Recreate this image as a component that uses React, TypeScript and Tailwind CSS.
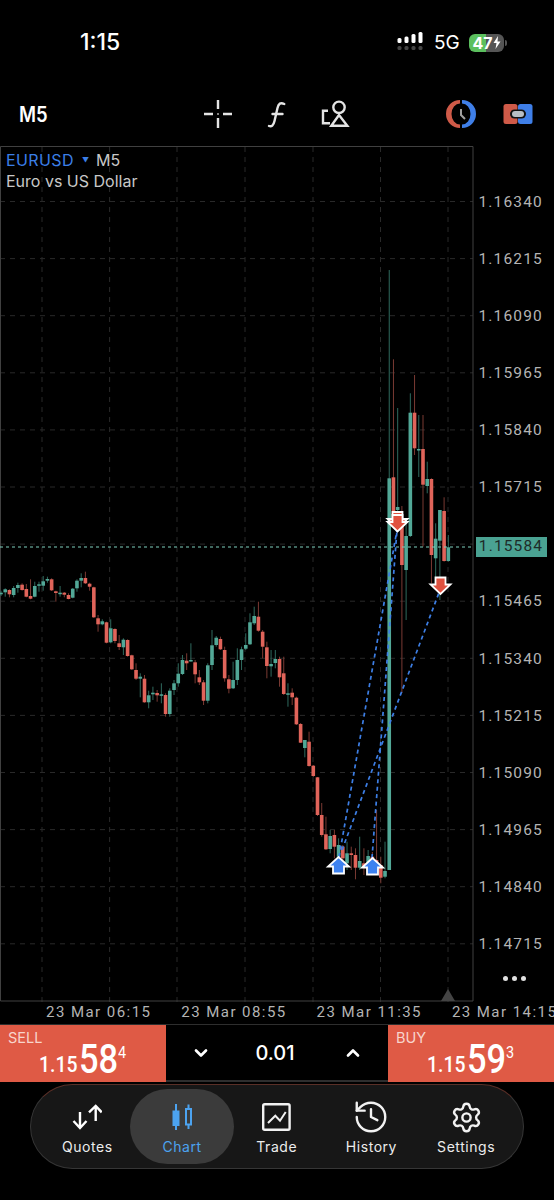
import { ChevronDown, ChevronUp, History, Settings } from "lucide-react"

type Candle = [string, number, number, number, number]

const candles: Candle[] = [
  ["g", 592.7, 594.3, 590.7, 596], ["g", 589.3, 592.3, 588.3, 596.7], ["r", 590, 594.3, 589.3, 597.3], ["g", 588, 595, 586, 597.3],
  ["g", 585, 588, 582.7, 592.7], ["r", 584.7, 590, 583.3, 590.7], ["r", 589, 596.7, 584, 597.3], ["r", 596, 598.7, 579.3, 599.3],
  ["g", 586, 596.7, 581.7, 597.3], ["g", 584.3, 585, 581.7, 591.7], ["g", 581.3, 585.7, 576, 590.7], ["g", 579, 580.7, 576.7, 582.7],
  ["r", 579.3, 590.3, 578.3, 591], ["r", 591.3, 593, 590.7, 601.7], ["g", 592.7, 593.3, 586, 596.7], ["r", 592.7, 594.7, 592, 597.3],
  ["r", 595, 599, 593.3, 599.3], ["g", 588.7, 597.7, 588, 598.3], ["g", 580.7, 588.3, 579.3, 591.7], ["g", 578, 580.7, 573.3, 587.3],
  ["r", 578, 583.3, 571.7, 584], ["r", 583.7, 586.7, 582.7, 590.7], ["r", 587.3, 617.3, 586.7, 618], ["r", 618.3, 624.3, 615, 631.7],
  ["g", 621.3, 624.3, 619.3, 625.3], ["r", 622.3, 642.7, 621.7, 643.3], ["g", 628.3, 642.3, 619.3, 643.3], ["r", 629, 641, 628.3, 643.3],
  ["r", 643.3, 647, 635, 650], ["g", 639.7, 647.3, 638.3, 655], ["r", 640, 656, 639.3, 656.7], ["r", 655.3, 669.3, 654.7, 670],
  ["r", 670, 678.7, 663.3, 680], ["g", 676.7, 678.7, 673.3, 697.3], ["r", 678.7, 702.3, 675, 702.7], ["g", 695.3, 702.3, 690.7, 708.3],
  ["g", 692.7, 694.3, 686.7, 700], ["r", 693, 695.3, 690, 701.7], ["g", 694.3, 695, 683.3, 703.3], ["r", 695, 714, 693.3, 716.7],
  ["g", 690.7, 714, 688.3, 716.7], ["g", 683.3, 690, 680, 695], ["g", 673.7, 683.3, 663.3, 686.7], ["g", 660, 674, 655, 675],
  ["r", 660.7, 663.3, 653.3, 670], ["g", 660, 660.7, 643.3, 661.7], ["r", 662.3, 674.3, 660, 683.3], ["r", 677.3, 682.3, 670, 685],
  ["r", 682.3, 700.7, 680, 705], ["g", 665.3, 700.7, 663.3, 703.3], ["g", 645.3, 665, 630, 670], ["g", 637.7, 645, 636, 646.7],
  ["r", 639, 649.3, 636.7, 650], ["r", 650, 678.3, 646.7, 681.7], ["r", 679.3, 688.7, 675, 693.3], ["g", 680, 688.3, 661.7, 689],
  ["g", 660, 680, 648.3, 685], ["g", 649.3, 660, 646.7, 670], ["g", 645, 648.7, 633.3, 650], ["g", 622.3, 644.3, 613.3, 645],
  ["g", 616, 623.3, 606.7, 625], ["r", 616.7, 630.7, 601.7, 631.7], ["r", 631.7, 646.7, 630, 658.3], ["r", 647.3, 666, 641.7, 678.3],
  ["g", 664, 666.3, 650, 676.7], ["g", 659, 663, 650, 668.3], ["r", 659, 677.3, 656.7, 686.7], ["r", 673.3, 694, 656.7, 695],
  ["g", 693.3, 694.7, 683.3, 706.7], ["r", 692.7, 697.3, 688.3, 705], ["r", 697.7, 724.3, 696.7, 725], ["r", 724, 742.7, 723, 743],
  ["g", 740, 748, 740, 757.3], ["r", 741.7, 766, 731.7, 766.7], ["r", 765.7, 776, 765, 777], ["r", 777.3, 815, 777, 816],
  ["r", 815, 835, 803, 836.7], ["r", 834.3, 849.3, 816.7, 850], ["g", 836, 849, 830, 853.3], ["r", 835, 846.7, 830, 858.3],
  ["g", 845, 856.7, 838.3, 863.3], ["r", 846.7, 858.3, 845, 860], ["g", 853.3, 863.3, 841.7, 870], ["r", 853.3, 855, 846.7, 870],
  ["r", 855, 867.7, 848.3, 879.3], ["g", 861, 867.7, 836.7, 870], ["r", 863.3, 866.7, 848.3, 875], ["g", 856, 863.3, 850, 868.3],
  ["r", 856.7, 866.7, 852, 870], ["r", 860, 865, 810, 866.7], ["r", 865, 877.7, 856.7, 883.3], ["g", 871, 876.7, 841.7, 878.3],
  ["g", 478.3, 870, 270, 870], ["r", 477.3, 525, 359.3, 525], ["g", 507, 510, 408, 512], ["r", 523, 565, 506, 693],
  ["g", 536, 570, 520, 620], ["g", 412.7, 536, 393.3, 537], ["r", 412.7, 448.3, 375, 455], ["g", 449, 450, 415, 477],
  ["r", 449, 484.7, 415, 546.7], ["g", 479, 486, 461.7, 493.3], ["r", 479, 555, 478.3, 583.3], ["g", 538.7, 558.3, 523.3, 580],
  ["g", 510, 540.7, 510, 600], ["r", 511, 561, 497.3, 561.7], ["g", 547.3, 561, 535, 561.7],
]

const gridX = [42, 109.6, 177, 245, 313, 380.5, 448]
const gridY = [201.5, 258.6, 315.7, 372.8, 429.9, 487, 544.1, 601.2, 658.3, 715.4, 772.5, 829.6, 886.7, 943.8]
const prices = ["1.16340", "1.16215", "1.16090", "1.15965", "1.15840", "1.15715", "", "1.15465", "1.15340", "1.15215", "1.15090", "1.14965", "1.14840", "1.14715"]
const dates = ["23 Mar 06:15", "23 Mar 08:55", "23 Mar 11:35", "23 Mar 14:15"]

function DownArrow({ x, y }: { x: number; y: number }) {
  return (
    <path
      d={`M${x - 5} ${y} h10 v7 h5 l-10 9.5 l-10 -9.5 h5 z`}
      fill="#e0513f"
      stroke="#fff"
      strokeWidth="1.8"
    />
  )
}

function UpArrow({ x, y }: { x: number; y: number }) {
  return (
    <path
      d={`M${x} ${y} l10.5 9.5 h-5 v7 h-11 v-7 h-5 z`}
      fill="#3d82f0"
      stroke="#fff"
      strokeWidth="1.8"
    />
  )
}

function Chart() {
  return (
    <svg width="474" height="860" viewBox="0 146 474 860" className="block shrink-0">
      {gridY.map((y) => (
        <line key={y} x1="0" x2="473" y1={y} y2={y} stroke="#292929" strokeWidth="1" strokeDasharray="5 5" />
      ))}
      {gridX.map((x) => (
        <line key={x} x1={x} x2={x} y1="147" y2="1004" stroke="#292929" strokeWidth="1" strokeDasharray="5 5" />
      ))}
      <path d="M0.5 146.5 H473 V1001 H0.5 Z" fill="none" stroke="#404040" strokeWidth="1" />
      <path d="M441 1001 L448 989 L455 1001 Z" fill="#444" />
      {candles.map((c, i) => {
        const x = 1 + 4.22 * i
        return (
          <line key={i} x1={x} x2={x} y1={c[3]} y2={c[4]} stroke={c[0] === "g" ? "#2f6a5e" : "#7a3a33"} strokeWidth="1" />
        )
      })}
      {candles.map((c, i) => {
        const x = 1 + 4.22 * i
        return (
          <rect
            key={i}
            x={x - 1.8}
            y={c[1]}
            width="3.6"
            height={Math.max(c[2] - c[1], 1.5)}
            fill={c[0] === "g" ? "#52a897" : "#e0645a"}
          />
        )
      })}
      <line x1="0" x2="473" y1="547" y2="547" stroke="#7fd0be" strokeWidth="1" strokeDasharray="3 3" />
      <g stroke="#3d7fe6" strokeWidth="1.7" strokeDasharray="4 3.5" fill="none">
        <line x1="339" y1="857" x2="397" y2="530" />
        <line x1="342" y1="850" x2="440" y2="590" />
        <line x1="372" y1="858" x2="397" y2="530" />
      </g>
      <DownArrow x={397.5} y={512} />
      <DownArrow x={397.5} y={515} />
      <DownArrow x={440.5} y={577.5} />
      <UpArrow x={338.5} y={857} />
      <UpArrow x={372.5} y={858} />
    </svg>
  )
}

function StatusBar() {
  return (
    <div className="flex h-[86px] items-center pl-[80px] pb-[1px] text-white">
      <span className="w-[317px] text-[23px] font-medium leading-none">1:15</span>
      <svg width="30" height="22" viewBox="0 0 30 22" className="mt-[1px]">
        <g fill="#fff">
          <rect x="0.5" y="6" width="4" height="5" rx="1.5" />
          <rect x="7.5" y="4.5" width="4" height="6.5" rx="1.5" />
          <rect x="14.5" y="2" width="4" height="9" rx="1.5" />
          <rect x="21.5" y="0" width="4" height="11" rx="1.5" />
        </g>
        <g fill="#444">
          <rect x="0.5" y="14" width="4" height="4" rx="1.5" />
          <rect x="7.5" y="14" width="4" height="4" rx="1.5" />
          <rect x="14.5" y="14" width="4" height="4" rx="1.5" />
          <rect x="21.5" y="14" width="4" height="4" rx="1.5" />
        </g>
      </svg>
      <span className="ml-[7px] w-[35px] text-[19px] leading-none">5G</span>
      <div className="flex h-[18px] w-[35px] items-center justify-center rounded-[6px] bg-[linear-gradient(90deg,#5bbf5e_48%,#555_48%)] text-[16px] font-bold leading-none">
        47
        <svg width="8" height="13" viewBox="0 0 8 13">
          <path d="M5 0 L0.5 7 H3.5 L2.5 13 L7.5 5.5 H4.5 Z" fill="#fff" />
        </svg>
      </div>
      <div className="ml-[1px] h-[6px] w-[1.5px] rounded-r-full bg-[#555]" />
    </div>
  )
}

function Toolbar() {
  return (
    <div className="flex h-[60px] items-center pb-[4px] pl-[19px] text-[#e6e6e6]">
      <span className="w-[171px] origin-left scale-x-[0.88] text-[21px] font-semibold leading-none text-white">M5</span>
      <div className="flex w-[56px] justify-center">
        <svg width="30" height="30" viewBox="0 0 30 30" stroke="#e4e4e4" strokeWidth="2.4" fill="none">
          <path d="M1 15 H10 M20 15 H29 M15 1 V10 M15 19 V29" />
          <circle cx="15" cy="15" r="0.5" strokeWidth="1" />
        </svg>
      </div>
      <div className="flex w-[62px] justify-center">
        <svg width="30" height="30" viewBox="0 0 30 30" stroke="#e4e4e4" strokeWidth="2.4" fill="none" strokeLinecap="round">
          <path d="M22.3 5 C18.5 3.2 16.5 4.5 15.5 9 L12.5 22 C11.5 26.5 9.5 28 7 27" />
          <path d="M10.5 15 H20.5" />
        </svg>
      </div>
      <div className="flex w-[54px] justify-center">
        <svg width="30" height="30" viewBox="0 0 30 30" stroke="#e4e4e4" strokeWidth="2.4" fill="none">
          <circle cx="19" cy="8.3" r="5.7" />
          <path d="M19 16 L11.3 26.7 H27.3 Z" />
          <path d="M8 11.7 H3 V24.3 H10" />
        </svg>
      </div>
      <div className="w-[71px]" />
      <div className="flex w-[56px] justify-center">
        <svg width="30" height="30" viewBox="0 0 30 30">
          <path d="M14 1 A14 14 0 0 0 14 29 V25.5 A8.5 10.5 0 0 1 14 4.5 Z" fill="#cf5a48" />
          <path d="M16 1 A14 14 0 0 1 16 29 V25.5 A8.5 10.5 0 0 0 16 4.5 Z" fill="#3f7fe8" />
          <path d="M15 10 V16 L19 20" stroke="#a0a0a0" strokeWidth="2" fill="none" />
        </svg>
      </div>
      <div className="flex w-[58px] justify-center">
        <svg width="30" height="22" viewBox="0 0 30 22">
          <rect x="0.5" y="1" width="14" height="20" rx="2.5" fill="#cf5a48" />
          <rect x="15" y="1" width="14.5" height="20" rx="2.5" fill="#3f7fe8" />
          <rect x="7" y="6.5" width="16" height="9" rx="4.5" fill="#111" />
          <rect x="9" y="8" width="12" height="6" rx="3" fill="#b8bec4" />
        </svg>
      </div>
    </div>
  )
}

function PriceAxis() {
  return (
    <div className="relative flex w-[80px] flex-col pt-[28px] font-['Roboto',sans-serif] text-[15.5px] tracking-[1.15px] text-[#b4b4b4]">
      {prices.map((p, i) => (
        <div key={i} className="flex h-[57.1px] shrink-0 items-center pl-[4.5px] leading-none">
          {p}
        </div>
      ))}
      <div className="absolute left-[1.5px] top-[391px] flex h-[20px] w-[71px] items-center justify-center bg-[#4aa292] leading-none text-[#1e2b28]">
        1.15584
      </div>
      <div className="absolute left-[29px] top-[830px] flex gap-[4px]">
        <span className="size-[5px] rounded-full bg-[#e0e0e0]" />
        <span className="size-[5px] rounded-full bg-[#e0e0e0]" />
        <span className="size-[5px] rounded-full bg-[#e0e0e0]" />
      </div>
    </div>
  )
}

function TradeBox({ label, big, small }: { label: string; big: string; small: string }) {
  return (
    <div className="flex w-[166px] flex-col bg-[#df5a45] text-white">
      <span className="ml-[8px] mt-[5px] text-[14.5px] leading-[15px] text-[#f8d5cc]">{label}</span>
      <div className="ml-[39px] -mt-[2px] flex h-[34px] items-end font-['Roboto',sans-serif]">
        <span className="w-[40px] origin-left scale-x-[0.88] text-[22px] font-medium leading-[25px]">1.15</span>
        <span className="w-[38px] origin-left scale-x-[0.86] text-[40px] font-medium leading-[34px]">{big}</span>
        <span className="mb-[16px] ml-[1px] origin-left scale-x-[0.85] text-[17px] leading-[18px]">{small}</span>
      </div>
    </div>
  )
}

function NavItem({ label, children, active }: { label: string; children: React.ReactNode; active?: boolean }) {
  return (
    <div
      className={
        active
          ? "mx-[-4.65px] flex h-[75px] w-[104px] flex-col items-center rounded-[40px] bg-[#3b3b3b] pt-[13px] text-[#4ca3f0]"
          : "flex h-[75px] w-[94.7px] flex-col items-center pt-[13px] text-[#ececec]"
      }
    >
      <div className="flex h-[30px] items-center justify-center">{children}</div>
      <span className="mt-[6px] text-[14px] leading-[18px] tracking-[0.55px]">{label}</span>
    </div>
  )
}

function BottomNav() {
  return (
    <div className="mx-[30px] mt-[2px] flex h-[85px] items-center rounded-[44px] border border-[#363636] border-t-[#5a2f27] bg-[#171717] px-[9px]">
      <NavItem label="Quotes">
        <svg width="30" height="26" viewBox="0 0 30 26" fill="none" stroke="#fff" strokeWidth="2.4">
          <path d="M8 8 V24 M1.5 17 L8 24 L14.5 17" />
          <path d="M23.7 2 V17 M17 8.3 L23.7 2 L29.7 8.3" />
        </svg>
      </NavItem>
      <NavItem label="Chart" active>
        <svg width="24" height="28" viewBox="0 0 24 28" fill="none" stroke="#4ca3f0" strokeWidth="2">
          <rect x="3" y="8" width="6" height="14.5" fill="#4ca3f0" strokeWidth="1" />
          <path d="M6 1 V27" />
          <rect x="16" y="6" width="5" height="15.5" />
          <path d="M18.5 1.5 V6 M18.5 21.5 V26" />
        </svg>
      </NavItem>
      <NavItem label="Trade">
        <svg width="29" height="28" viewBox="0 0 29 28" fill="none" stroke="#f2f2f2" strokeWidth="2.4">
          <rect x="1.2" y="1.2" width="26.4" height="25.6" rx="1.5" />
          <path d="M6 20 L13.3 12.7 L18 17.7 L23.7 9" strokeWidth="2" />
        </svg>
      </NavItem>
      <NavItem label="History">
        <History size={38} strokeWidth={1.5} color="#f2f2f2" className="-my-[4px]" />
      </NavItem>
      <NavItem label="Settings">
        <Settings size={33} strokeWidth={1.75} color="#f2f2f2" />
      </NavItem>
    </div>
  )
}

export default function App() {
  return (
    <div className="h-[1200px] w-[554px] overflow-hidden bg-black font-['Inter',sans-serif] text-white">
      <StatusBar />
      <Toolbar />

      <div className="relative flex h-[855px]">
        <Chart />
        <PriceAxis />
        <div className="absolute left-[6px] top-[4px] text-[16px] leading-[21px] text-[#c8c8c8]">
          <div className="flex items-center">
            <span className="tracking-[0.4px] text-[#3b7fe8]">EURUSD</span>
            <span className="ml-[8px] mr-[7px] text-[7px] text-[#3b7fe8]">▼</span>
            <span>M5</span>
          </div>
          <div>Euro vs US Dollar</div>
        </div>
      </div>

      <div className="flex h-[24px] items-center overflow-hidden whitespace-nowrap border-b border-[#2e2e2e] pl-[46px] font-['Roboto',sans-serif] text-[15px] tracking-[1.45px] text-[#b4b4b4]">
        {dates.map((d) => (
          <span key={d} className="w-[135.3px] shrink-0">
            {d}
          </span>
        ))}
      </div>

      <div className="flex h-[57px]">
        <TradeBox label="SELL" big="58" small="4" />
        <div className="flex flex-1 items-center border-b-2 border-[#2e2e2e]">
          <div className="flex w-[70px] justify-center">
            <ChevronDown size={20} strokeWidth={3.2} color="#fff" />
          </div>
          <span className="w-[78px] text-center text-[20px] font-medium leading-none">0.01</span>
          <div className="ml-[4px] flex w-[70px] justify-center">
            <ChevronUp size={20} strokeWidth={3.2} color="#fff" />
          </div>
        </div>
        <TradeBox label="BUY" big="59" small="3" />
      </div>

      <BottomNav />
    </div>
  )
}
